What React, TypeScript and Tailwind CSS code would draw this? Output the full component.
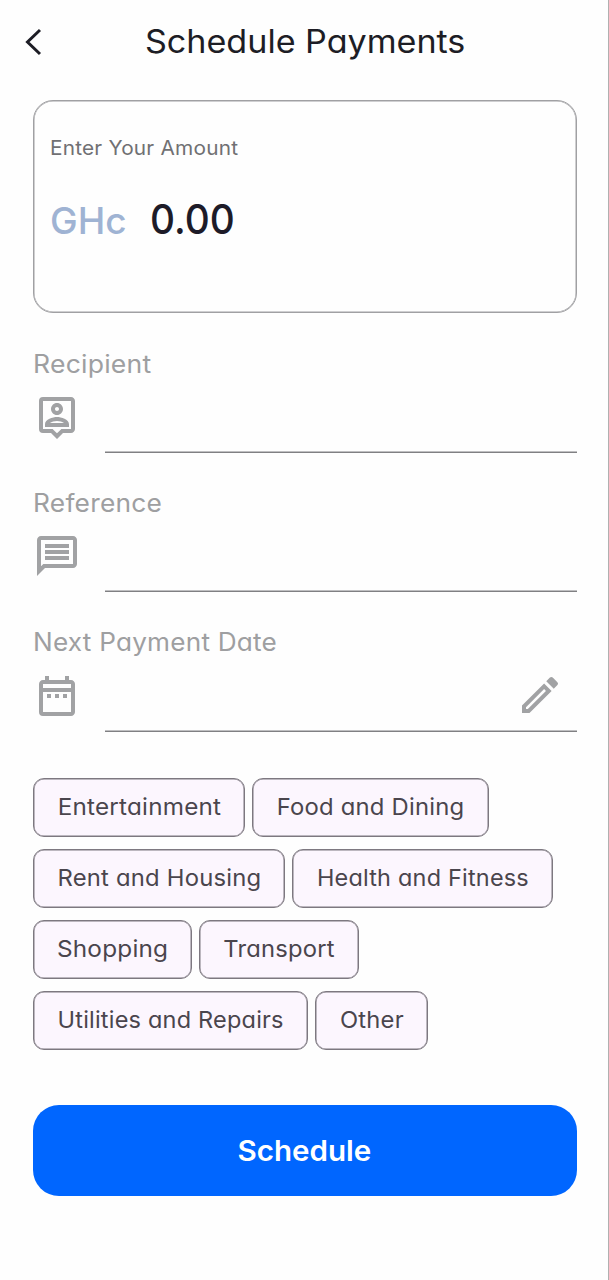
import type { ReactNode } from "react";
import {
  MdOutlineDateRange,
  MdOutlineEdit,
  MdOutlineMessage,
  MdOutlinePersonPin,
} from "react-icons/md";

type Chip = { label: string; box: string; text: string };

const chipRows: Chip[][] = [
  [
    { label: "Entertainment", box: "w-[212px]", text: "scale-x-[1.055]" },
    { label: "Food and Dining", box: "w-[237px]", text: "scale-x-[1.036]" },
  ],
  [
    { label: "Rent and Housing", box: "w-[252px]", text: "scale-x-[1.036]" },
    { label: "Health and Fitness", box: "w-[261px]", text: "scale-x-[1.02]" },
  ],
  [
    { label: "Shopping", box: "w-[159px]", text: "scale-x-[1.058]" },
    { label: "Transport", box: "w-[160px]", text: "scale-x-[1.033]" },
  ],
  [
    { label: "Utilities and Repairs", box: "w-[275px]", text: "scale-x-[1.022]" },
    { label: "Other", box: "w-[113px]", text: "scale-x-[1.033]" },
  ],
];

function Field({
  label,
  stretch,
  icon,
  action,
}: {
  label: string;
  stretch: string;
  icon: ReactNode;
  action?: ReactNode;
}) {
  return (
    <div className="flex h-[139.3px] flex-col">
      <div className="h-[30px] text-[25px] leading-[30px] font-[380] tracking-[0.2px] text-[#9e9fa1]">
        <span className={`inline-block origin-left ${stretch}`}>{label}</span>
      </div>
      <div className="mt-[13.4px] flex h-[61px]">
        <div className="w-[72px] pt-[1px] text-[#a1a2a4]">{icon}</div>
        <div className="flex flex-1 justify-end border-b border-[#808083] pt-[0.5px] pr-[12.5px] text-[#a1a2a4] shadow-[inset_0_-0.5px_0_0_#808083]">
          {action}
        </div>
      </div>
    </div>
  );
}

export default function App() {
  return (
    <div className="flex h-[1280px] w-[609px] flex-col border-r border-[#b0b0b0] bg-[#fefefe] font-['Inter',sans-serif] [font-feature-settings:'cv11']">
      <header className="flex h-[83px] items-center">
        <button className="ml-[24px] w-[121px]" aria-label="Back">
          <svg width="20" height="30" viewBox="0 0 20 30" fill="none" className="text-[#1d1d25]">
            <path d="M16 3 3.5 15 16 27" stroke="currentColor" strokeWidth="3" />
          </svg>
        </button>
        <h1 className="text-[32px] font-[370] whitespace-nowrap text-[#1d1d25]">
          <span className="inline-block origin-left scale-x-[1.065]">Schedule Payments</span>
        </h1>
      </header>
      <main className="flex flex-col pr-[31.5px] pl-[33px]">
        <section className="mt-[17px] flex h-[213px] flex-col rounded-[20px] border border-[#a0a0a3] pl-[16px] shadow-[inset_0_0_0_0.5px_#a0a0a3]">
          <p className="mt-[35px] h-[24px] text-[20px] leading-[24px] tracking-[0.2px] text-[#707073]">
            <span className="inline-block origin-left scale-x-[1.04]">Enter Your Amount</span>
          </p>
          <div className="mt-[34px] flex h-[50px] items-baseline leading-[50px]">
            <span className="w-[100px] text-[37px] font-medium text-[#9fb3d3]">GHc</span>
            <span className="inline-block origin-left scale-x-[0.945] text-[41px] font-[550] text-[#1d1b28]">
              0.00
            </span>
          </div>
        </section>
        <div className="mt-[35.6px] flex flex-col">
          <Field label="Recipient" stretch="scale-x-[1.063]" icon={<MdOutlinePersonPin size={48} />} />
          <Field label="Reference" stretch="scale-x-[1.055]" icon={<MdOutlineMessage size={48} />} />
          <Field
            label="Next Payment Date"
            stretch="scale-x-[1.047]"
            icon={<MdOutlineDateRange size={48} />}
            action={<MdOutlineEdit size={48} />}
          />
        </div>
        <div className="mt-[11.5px] flex flex-col gap-[12px]">
          {chipRows.map((row, i) => (
            <div key={i} className="flex gap-[7px]">
              {row.map((chip) => (
                <button
                  key={chip.label}
                  className={`flex h-[59px] shrink-0 items-center justify-center rounded-[11px] border border-[#7d7880] bg-[#fcf6fe] text-[23px] tracking-[0.2px] whitespace-nowrap text-[#4a454d] shadow-[inset_0_0_0_0.5px_#7d7880] ${chip.box}`}
                >
                  <span className={`inline-block ${chip.text}`}>{chip.label}</span>
                </button>
              ))}
            </div>
          ))}
        </div>
        <button className="mt-[55px] flex h-[91px] items-center justify-center rounded-[26px] bg-[#0066ff] pt-[2px] text-[28px] font-semibold text-white">
          <span className="inline-block scale-x-[1.056]">Schedule</span>
        </button>
      </main>
    </div>
  );
}
